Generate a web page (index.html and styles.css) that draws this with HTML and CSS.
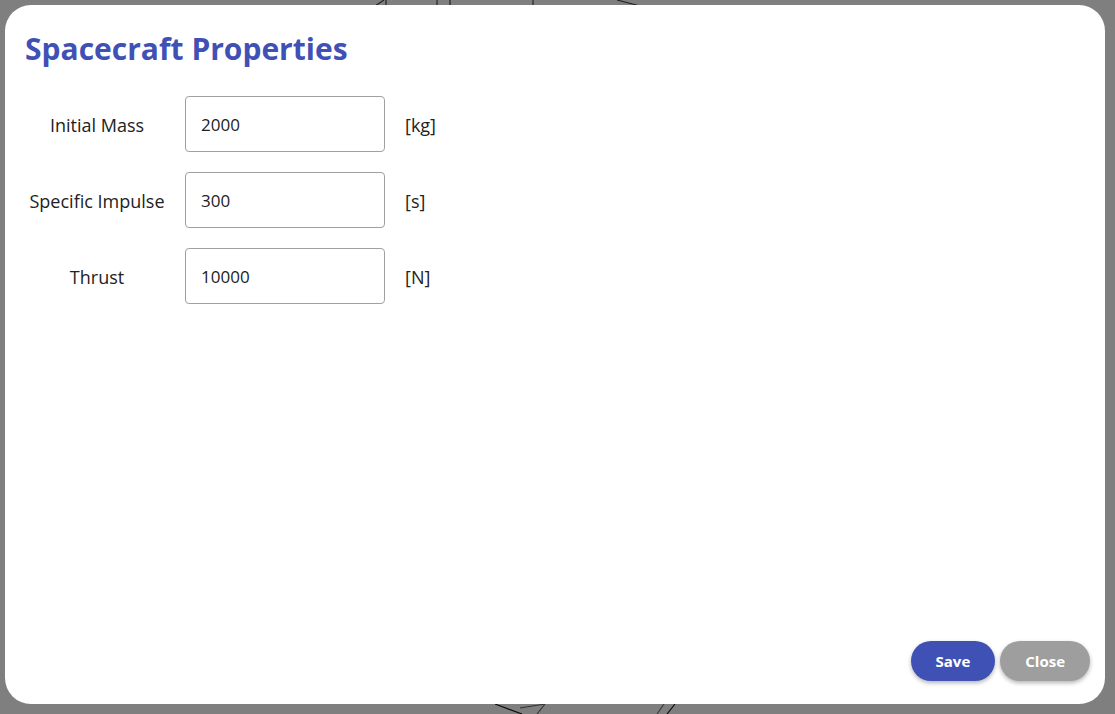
FILE: index.html
```html
<!DOCTYPE html>
<html lang="en">
<head>
<meta charset="utf-8">
<title>Spacecraft Properties</title>
<link rel="stylesheet" href="styles.css">
</head>
<body>
<svg class="canvas" width="1115" height="714" viewBox="0 0 1115 714" aria-hidden="true">
  <g fill="none" stroke-width="1.2">
    <line x1="372" y1="8" x2="384" y2="0" stroke="#444"/>
    <line x1="386" y1="0" x2="386" y2="8" stroke="#444"/>
    <line x1="437" y1="0" x2="437" y2="8" stroke="#555"/>
    <line x1="450" y1="0" x2="450" y2="8" stroke="#444"/>
    <line x1="533" y1="0" x2="533" y2="8" stroke="#555"/>
    <line x1="617" y1="0" x2="640" y2="6" stroke="#444"/>
    <line x1="495" y1="704" x2="522" y2="714" stroke="#111"/>
    <line x1="520" y1="708" x2="545" y2="704" stroke="#666"/>
    <line x1="537" y1="714" x2="545" y2="704" stroke="#666"/>
    <line x1="657" y1="714" x2="664" y2="704" stroke="#777"/>
    <line x1="667" y1="714" x2="675" y2="704" stroke="#111"/>
  </g>
</svg>
<div class="overlay"></div>
<div class="modal">
  <h1 class="modal-title">Spacecraft Properties</h1>
  <div class="modal-body">
    <div class="form-row">
      <label class="field-label" for="mass">Initial Mass</label>
      <input class="field-input" id="mass" type="text" value="2000">
      <span class="field-unit">[kg]</span>
    </div>
    <div class="form-row">
      <label class="field-label" for="isp">Specific Impulse</label>
      <input class="field-input" id="isp" type="text" value="300">
      <span class="field-unit">[s]</span>
    </div>
    <div class="form-row">
      <label class="field-label" for="thrust">Thrust</label>
      <input class="field-input" id="thrust" type="text" value="10000">
      <span class="field-unit">[N]</span>
    </div>
  </div>
  <div class="modal-footer">
    <button class="btn btn-primary" type="button">Save</button>
    <button class="btn btn-secondary" type="button">Close</button>
  </div>
</div>
</body>
</html>
```

FILE: styles.css
```css
* {
  box-sizing: border-box;
}

html, body {
  margin: 0;
  padding: 0;
  width: 1115px;
  height: 714px;
  overflow: hidden;
  background: #ffffff;
  font-family: "Open Sans", "Noto Sans", "Liberation Sans", sans-serif;
}

body {
  padding: 5px 10px 10px 5px;
}

.canvas {
  position: absolute;
  left: 0;
  top: 0;
}

.overlay {
  position: fixed;
  inset: 0;
  background: rgba(0, 0, 0, 0.5);
}

.modal {
  position: relative;
  width: 1100px;
  height: 699px;
  background: #ffffff;
  border-radius: 26px;
  display: flex;
  flex-direction: column;
  padding: 26px 15px 23px 20px;
}

.modal-title {
  margin: 0;
  font-size: 30px;
  line-height: 36px;
  font-weight: 700;
  color: #3f51b5;
}

.modal-body {
  flex: 1;
  display: flex;
  flex-direction: column;
  gap: 20px;
  padding-top: 29px;
}

.form-row {
  display: flex;
  align-items: center;
  height: 56px;
}

.field-label {
  width: 144px;
  padding-top: 2px;
  text-align: center;
  font-size: 18px;
  color: #222222;
}

.field-input {
  margin-left: 16px;
  width: 200px;
  height: 56px;
  border: 1px solid #a0a0a0;
  border-radius: 4px;
  padding: 0 15px;
  font-family: inherit;
  font-size: 17px;
  color: #222222;
  background: #ffffff;
  outline: none;
}

.field-unit {
  margin-left: 20px;
  padding-top: 2px;
  font-size: 18px;
  color: #222222;
}

.modal-footer {
  display: flex;
  justify-content: flex-end;
  gap: 5px;
}

.btn {
  height: 40px;
  border: none;
  border-radius: 20px;
  padding: 0 25px;
  font-family: inherit;
  font-size: 15px;
  font-weight: 700;
  color: #ffffff;
  box-shadow: 0 2px 4px rgba(0, 0, 0, 0.3);
  cursor: pointer;
}

.btn-primary {
  background: #3f51b5;
}

.btn-secondary {
  background: #9e9e9e;
}
```
